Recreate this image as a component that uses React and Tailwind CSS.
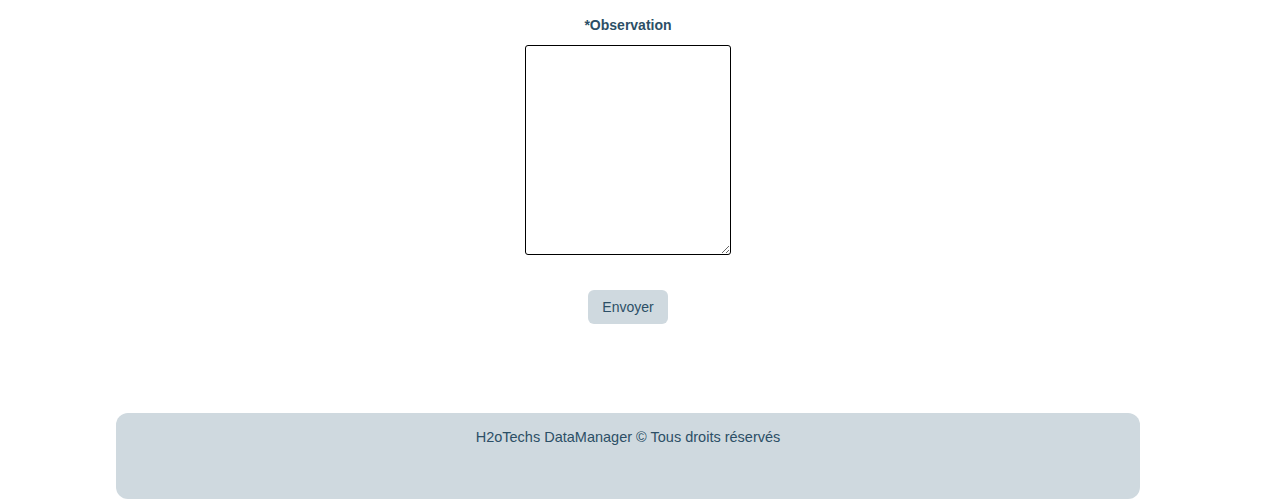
export default function App() {
    return (
        <div className="w-[1256px] bg-white font-['Liberation_Sans',Arial,sans-serif]">
            <form className="flex flex-col items-center pt-[16px]">
                <label className="text-[14px] font-bold leading-[18px] text-[#2c4f66]">*Observation</label>
                <textarea className="mt-[11px] h-[210px] w-[206px] rounded-[3px] border border-black bg-white outline-none" />
                <button
                    type="button"
                    className="mt-[35px] h-[34px] w-[80px] rounded-[6px] bg-[#cfd9df] text-[14px] text-[#2c4f66]"
                >
                    Envoyer
                </button>
            </form>
            <footer className="mx-auto mt-[89px] h-[86px] w-[1024px] rounded-[12px] bg-[#cfd9df] pt-[16px] text-center text-[14.5px] leading-[16px] text-[#2c4f66]">
                H2oTechs DataManager © Tous droits réservés
            </footer>
        </div>
    );
}
